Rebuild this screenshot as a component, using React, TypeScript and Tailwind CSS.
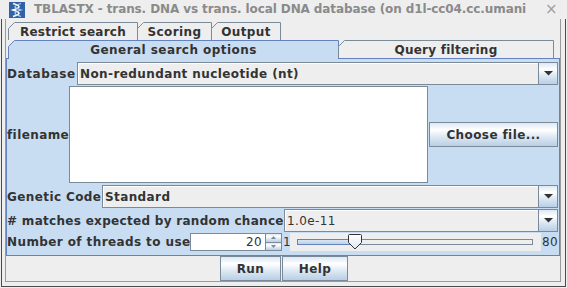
import React from 'react';

const btnGrad =
  'bg-[linear-gradient(180deg,#dde8f3_0%,#ffffff_30%,#dde8f3_60%,#b8cfe5_100%)]';

type TabProps = {
  label: string;
  width: number;
  className: string;
  selected?: boolean;
};

const Tab = ({ label, width, className, selected }: TabProps) => {
  const h = selected ? 19 : 18;
  return (
    <div className={`relative flex shrink-0 items-start justify-center ${className}`}>
      <svg className="absolute left-0 top-0" width={width} height={h}>
        <path
          d={`M0.5 ${h} V6.5 L6.5 0.5 H${width - 0.5} V${h}`}
          fill={selected ? '#c8ddf2' : '#eeeeee'}
          stroke={selected ? '#6382bf' : '#7a8a99'}
        />
      </svg>
      <span className="relative pt-[4px] leading-[12px]">{label}</span>
    </div>
  );
};

const Arrow = () => (
  <svg width="9" height="5">
    <path d="M0 0 H9 L4.5 4.5 Z" fill="#333333" />
  </svg>
);

const Combo = ({ value, plain }: { value: string; plain?: boolean }) => (
  <div className="flex h-[23px] min-w-0 flex-1 border border-[#7a8a99] bg-[#eeeeee]">
    <div
      className={`flex flex-1 items-center overflow-hidden whitespace-nowrap pl-[2px] shadow-[inset_1px_1px_0_#ffffff] ${
        plain ? 'font-normal' : ''
      }`}
    >
      {value}
    </div>
    <div className={`flex w-[19px] shrink-0 items-center justify-center border-l border-[#7a8a99] ${btnGrad}`}>
      <Arrow />
    </div>
  </div>
);

const Button = ({ label, className }: { label: string; className: string }) => (
  <div
    className={`flex h-[25px] shrink-0 items-center justify-center border border-[#7a8a99] ${btnGrad} ${className}`}
  >
    {label}
  </div>
);

const HelixIcon = () => (
  <svg width="16" height="16" viewBox="0 0 16 16">
    <rect x="0" y="0" width="16" height="16" fill="#2f62a6" />
    <path d="M4 1.5 C12 4 12 5.5 4 8 C12 10.5 12 12 4 14.5" stroke="#ffffff" strokeWidth="1.6" fill="none" />
    <path d="M12 1.5 C4 4 4 5.5 12 8 C4 10.5 4 12 12 14.5" stroke="#bcd3ee" strokeWidth="1.3" fill="none" />
  </svg>
);

const Slider = () => (
  <svg width="251" height="18" className="shrink-0 bg-[#eeeeee]">
    <defs>
      <linearGradient id="fill" x1="0" y1="0" x2="0" y2="1">
        <stop offset="0" stopColor="#dde8f3" />
        <stop offset="1" stopColor="#b8cfe5" />
      </linearGradient>
      <linearGradient id="thumb" x1="0" y1="0" x2="0" y2="1">
        <stop offset="0" stopColor="#ffffff" />
        <stop offset="1" stopColor="#dde8f3" />
      </linearGradient>
    </defs>
    <rect x="7.5" y="6.5" width="235" height="5" fill="#eeeeee" stroke="#7a8a99" />
    <rect x="7.5" y="6.5" width="57" height="5" fill="url(#fill)" stroke="#6382bf" />
    <path
      d="M58.5 2.5 Q58.5 1.5 59.5 1.5 H70.5 Q71.5 1.5 71.5 2.5 V9.5 L65 16 L58.5 9.5 Z"
      fill="url(#thumb)"
      stroke="#333333"
    />
  </svg>
);

export default function App() {
  return (
    <div className="relative h-[288px] w-[567px] overflow-hidden bg-[#eeeeee] font-['DejaVu_Sans',sans-serif] text-[12px] font-bold tracking-[0.4px] text-[#333333]">
      {/* Title bar */}
      <div className="flex h-[19px] items-center">
        <div className="ml-[9px] mt-[1px]">
          <HelixIcon />
        </div>
        <span className="ml-[9px] w-[504px] overflow-hidden whitespace-nowrap leading-[19px] tracking-[-0.1px] text-[#8a8a8a]">
          TBLASTX - trans. DNA vs trans. local DNA database (on d1l-cc04.cc.umani
        </span>
        <span className="ml-[7px] text-[15px] font-normal leading-[19px] text-[#a0a0a0]">×</span>
      </div>

      {/* Frame */}
      <div className="ml-[1px] h-[268px] w-[565px] border-x border-b border-[#4a4a4a] pb-[4px] pl-[3px] pr-[4px]">
        <div className="flex h-full flex-col border-x border-b border-[#9a9a9a]">
          {/* Tabs */}
          <div className="pl-[2px] pt-[3px]">
            <div className="flex h-[18px]">
              <Tab label="Restrict search" width={130} className="w-[130px] tracking-[0.25px]" />
              <Tab label="Scoring" width={75} className="-ml-[1px] w-[75px]" />
              <Tab label="Output" width={70} className="-ml-[1px] w-[70px]" />
            </div>
            <div className="relative z-10 flex h-[18px]">
              <Tab label="General search options" width={331} className="w-[331px] tracking-[0.45px]" selected />
              <Tab label="Query filtering" width={216} className="-ml-[1px] w-[216px] tracking-[0.25px]" />
            </div>
          </div>

          {/* Content panel */}
          <div className="flex h-[198px] shrink-0 flex-col border border-[#6382bf] bg-[#c8ddf2] pr-[1px] pt-[3px]">
            <div className="flex h-[23px] items-center">
              <span className="w-[70px] shrink-0 whitespace-nowrap tracking-[0.6px]">Database</span>
              <Combo value="Non-redundant nucleotide (nt)" />
            </div>

            <div className="mt-[1px] flex h-[97px] items-center">
              <span className="w-[62px] shrink-0 whitespace-nowrap">filename</span>
              <div className="h-[97px] w-[359px] shrink-0 border border-[#7a8a99] bg-white" />
              <Button label="Choose file..." className="ml-[1px] flex-1" />
            </div>

            <div className="mt-[2px] flex h-[23px] items-center">
              <span className="w-[95px] shrink-0 whitespace-nowrap">Genetic Code</span>
              <Combo value="Standard" />
            </div>

            <div className="mt-[1px] flex h-[23px] items-center">
              <span className="w-[277px] shrink-0 whitespace-nowrap tracking-[0.3px]">
                # matches expected by random chance
              </span>
              <Combo value="1.0e-11" plain />
            </div>

            <div className="mt-[1px] flex h-[18px] items-center">
              <span className="w-[183px] shrink-0 whitespace-nowrap">Number of threads to use</span>
              <div className="flex h-[18px] w-[76px] shrink-0 items-center justify-end border border-[#7a8a99] bg-white pr-[3px] font-normal">
                20
              </div>
              <div className="flex h-[18px] w-[16px] shrink-0 flex-col border border-l-0 border-[#7a8a99]">
                <div className={`flex flex-1 items-center justify-center border-b border-[#7a8a99] ${btnGrad}`}>
                  <svg width="5" height="3">
                    <path d="M2.5 0 L5 3 H0 Z" fill="#7a8a99" />
                  </svg>
                </div>
                <div className={`flex flex-1 items-center justify-center ${btnGrad}`}>
                  <svg width="5" height="3">
                    <path d="M0 0 H5 L2.5 3 Z" fill="#7a8a99" />
                  </svg>
                </div>
              </div>
              <span className="w-[8px] shrink-0 pl-[1px] font-normal leading-none">1</span>
              <Slider />
              <span className="flex-1 text-right font-normal leading-none">80</span>
            </div>
          </div>

          {/* Buttons */}
          <div className="flex h-[25px] gap-[1px] pl-[214px]">
            <Button label="Run" className="w-[61px]" />
            <Button label="Help" className="w-[66px]" />
          </div>
        </div>
      </div>
    </div>
  );
}
